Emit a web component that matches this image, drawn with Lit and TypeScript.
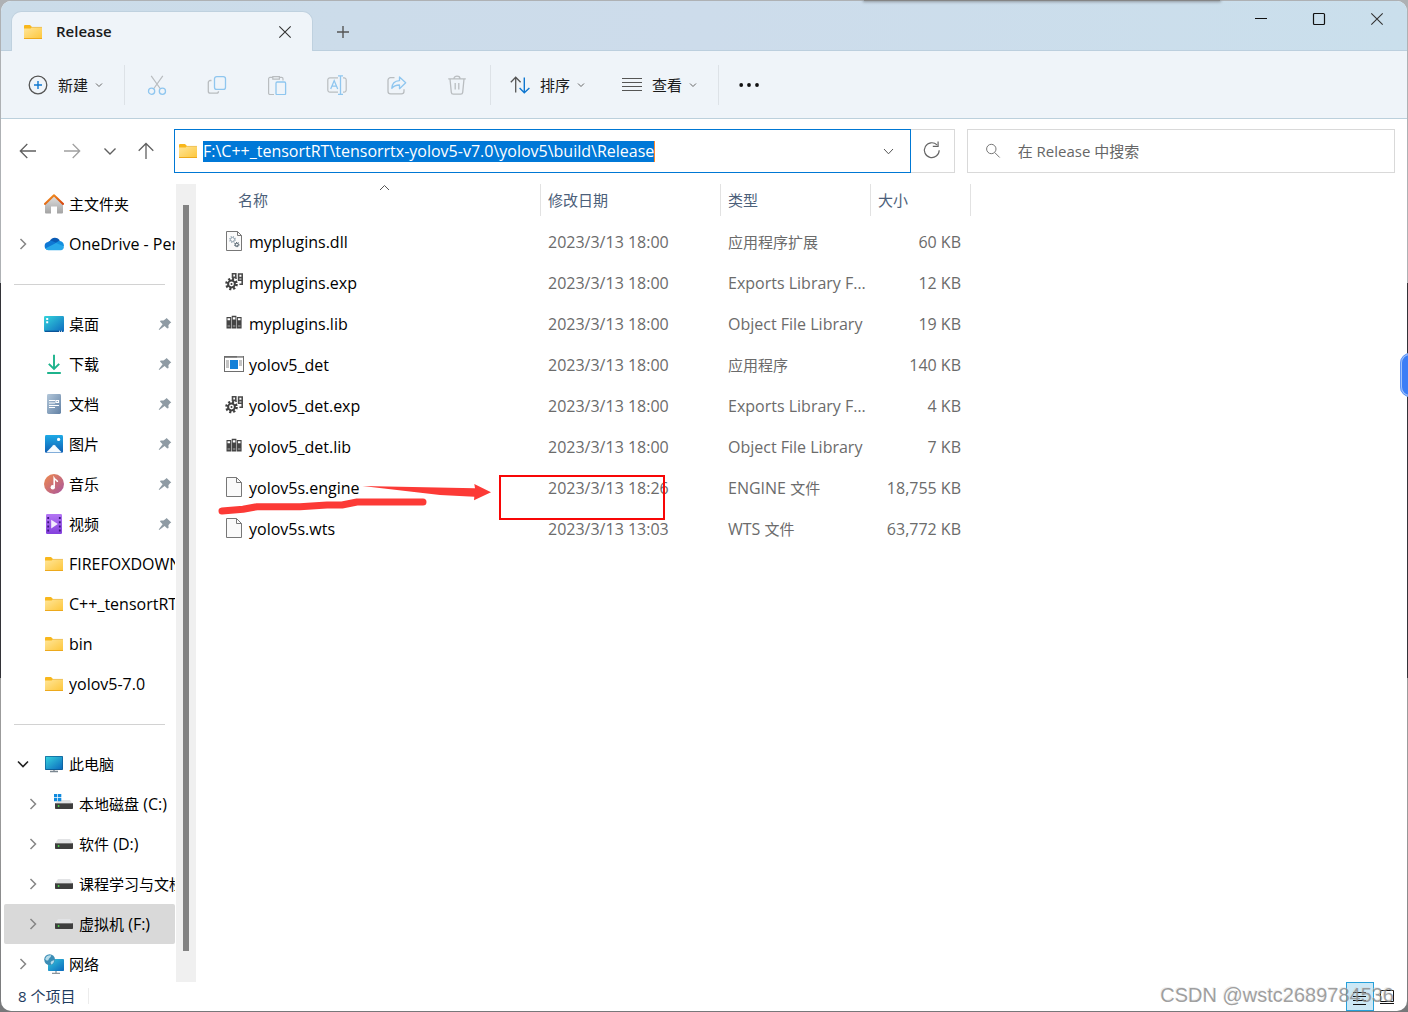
import { LitElement, html, css, svg, nothing, TemplateResult } from "lit";
import { customElement } from "lit/decorators.js";
import { classMap } from "lit/directives/class-map.js";

/* Splits a label into Han and Latin runs so that each run gets its own face and size. */
const runs = (text: string) =>
  (text.match(/[\u4e00-\u9fff]+|[^\u4e00-\u9fff]+/g) ?? []).map((part) =>
    /[\u4e00-\u9fff]/.test(part) ? html`<span class="han">${part}</span>` : part
  );

const icon = (body: unknown, size = 20) =>
  html`<svg class="icon" width=${size} height=${size} viewBox="0 0 ${size} ${size}" fill="none" aria-hidden="true">${body}</svg>`;

/* A ring of eight short teeth. */
const gearTeeth = (cx: number, cy: number, r: number, color: string, w: number) =>
  svg`<circle cx=${cx} cy=${cy} r=${r} stroke=${color} stroke-width=${w} stroke-dasharray="${r * 0.4} ${r * 0.3854}"/>`;

const art: Record<string, () => TemplateResult> = {
  folder: () =>
    icon(svg`
      <defs><linearGradient id="f" x1="0" y1="0" x2="1" y2="1"><stop offset="0" stop-color="#ffe69a"/><stop offset="1" stop-color="#fdc63a"/></linearGradient></defs>
      <path d="M1 4a1 1 0 0 1 1-1h5l2 2v3H1z" fill="#f8b71c"/>
      <path d="M1 6.6h6.6L9 5.2h9.4a.6.6 0 0 1 .6.6V16a1 1 0 0 1-1 1H2a1 1 0 0 1-1-1z" fill="url(#f)"/>
      <path d="M1 16.5h18" stroke="#eda91c"/><path d="M9 5.4h10" stroke="#e9b43c" stroke-width=".7"/>`),
  home: () =>
    icon(svg`
      <defs><linearGradient id="h" x1="0" y1="0" x2="0" y2="1"><stop offset="0" stop-color="#e2e2e2"/><stop offset="1" stop-color="#a3a3a3"/></linearGradient>
      <linearGradient id="r" x1="0" y1="0" x2="1" y2="1"><stop offset="0" stop-color="#f59a23"/><stop offset="1" stop-color="#d8430c"/></linearGradient></defs>
      <path d="M1 9.5 10 1.6l9 7.9v9a1 1 0 0 1-1 1h-5v-7.1H7v7.1H2a1 1 0 0 1-1-1z" fill="url(#h)"/>
      <path d="M.9 9.9 10 1.300l9.100 8.600" stroke="url(#r)" stroke-width="2.100" stroke-linecap="round" stroke-linejoin="round"/>`),
  cloud: () =>
    icon(svg`
      <path d="M5.800 7.200A5.400 5.400 0 0 1 15.800 7L13 12z" fill="#0a5bb5"/>
      <path d="M4 8a4.300 4.300 0 0 1 4.600-.8L17 11l-13 4.900A4 4 0 0 1 4 8z" fill="#0f78d4"/>
      <path d="M11 9.300 14.800 7a4.600 4.600 0 0 1 5.100 5l-3 1z" fill="#1490df"/>
      <path d="M1.300 14.500 12 9.100l7.800 3.100a3.300 3.300 0 0 1-3.100 4H4.300a4.100 4.100 0 0 1-3-1.700z" fill="#28a8ea"/>`),
  desktop: () =>
    icon(svg`
      <defs><linearGradient id="d" x1="0" y1="0" x2="1" y2="1"><stop offset="0" stop-color="#35d5dc"/><stop offset="1" stop-color="#0d69bf"/></linearGradient></defs>
      <rect y="2" width="20" height="16" rx="1.200" fill="url(#d)"/>
      <path d="M1 17.300h18" stroke="#0a4f93" stroke-width="1.200"/>
      <path d="M2.200 4h2v2h-2zM2.200 7.200h2v2h-2zM15 16.800h1v1h-1zM17 16.800h1v1h-1z" fill="#fff"/>`),
  download: () =>
    icon(svg`<path d="M10 .8v14M4.800 9.800 10 15l5.200-5.200M3.200 19h13.600" stroke="#1db38c" stroke-width="1.900"/>`),
  document: () =>
    icon(svg`
      <defs><linearGradient id="o" x1="0" y1="0" x2="1" y2="1"><stop offset="0" stop-color="#b3c7da"/><stop offset="1" stop-color="#6281a4"/></linearGradient></defs>
      <rect x="3" y="0" width="14" height="20" rx="1.400" fill="url(#o)"/>
      <path d="M5 6.500h6M5 9h6M5 11.500h10M5 13.500h6M12 6.500h2.500v2H12z" stroke="#fff" stroke-width="1.200"/>`),
  picture: () =>
    icon(svg`
      <defs><linearGradient id="p" x1="0" y1="0" x2="0" y2="1"><stop offset="0" stop-color="#1eaae6"/><stop offset="1" stop-color="#0e5db2"/></linearGradient></defs>
      <rect x="1" y="1" width="18" height="18" rx="1.400" fill="url(#p)"/>
      <path d="m2.200 18.400 7-7.200a1.200 1.200 0 0 1 1.600 0l7 7.200z" fill="#f5fbff"/><circle cx="14.600" cy="5.400" r="1.600" fill="#fff"/>`),
  music: () =>
    icon(svg`
      <defs><linearGradient id="m" x1="0" y1="0" x2="1" y2="1"><stop offset="0" stop-color="#f08a4b"/><stop offset="1" stop-color="#a8559f"/></linearGradient></defs>
      <circle cx="10" cy="10" r="10" fill="url(#m)"/>
      <path d="M10.200 12.500V4.400c.8 1.400 3 1.300 3.300 3.600" stroke="#fff" stroke-width="1.600"/><circle cx="8.800" cy="13.200" r="2.200" fill="#fff"/>`),
  video: () =>
    icon(svg`
      <defs><linearGradient id="v" x1="0" y1="0" x2="0" y2="1"><stop offset="0" stop-color="#b476f4"/><stop offset="1" stop-color="#8440dd"/></linearGradient></defs>
      <rect x="2" y="0" width="16" height="20" rx="1.200" fill="url(#v)"/>
      <path d="M4.200 3v15M15.800 3v15" stroke="#3d1580" stroke-width="1.800" stroke-dasharray="2 2.200"/>
      <path d="M7.200 5.800v8.600l6.600-4.300z" fill="#f3ecfd"/>`),
  pc: () =>
    icon(svg`
      <defs><linearGradient id="c" x1="0" y1="0" x2="1" y2="1"><stop offset="0" stop-color="#37d3de"/><stop offset="1" stop-color="#0b69bd"/></linearGradient></defs>
      <rect x="1" y="2" width="18" height="14" rx=".8" fill="#0b5a94"/><rect x="1.700" y="2.700" width="16.600" height="12.400" fill="url(#c)"/>
      <path d="M10 16v1.500M6 17.500h8" stroke="#7b8791" stroke-width="1.300"/>`),
  network: () =>
    icon(svg`
      <defs><linearGradient id="n" x1="0" y1="0" x2="1" y2="1"><stop offset="0" stop-color="#37c8dc"/><stop offset="1" stop-color="#0b69bd"/></linearGradient></defs>
      <rect x="4" y="5" width="16" height="12" rx=".8" fill="url(#n)"/>
      <path d="M12 17v2M8 19.300h8" stroke="#8b959d" stroke-width="1.300"/>
      <circle cx="5.600" cy="5.600" r="5.400" fill="#3c8db5"/>
      <path d="M1.200 5C2 2 5 1 7.200 1.400 6.500 4 5 3.600 4.600 5.400 4 7.400 2 6.600 1.200 5zM6.600 8.400c1-2 2.800-1.200 3.600-2.600.2 2.600-1.600 4.300-3 4.700z" fill="#b6dcea"/>`),
  drive: () =>
    icon(svg`
      <path d="M4 5h12l3 4.500H1z" fill="#e2e3e5"/>
      <rect x="1" y="9" width="18" height="6" rx=".8" fill="#3e3e3e"/><path d="M1.500 9.500h17" stroke="#777"/>
      <circle cx="4.600" cy="12" r=".9" fill="#4be04b"/>`),
  system: () =>
    icon(svg`
      <path d="M4 6h12l3 4.500H1z" fill="#e2e3e5"/>
      <rect x="1" y="9" width="18" height="6" rx=".8" fill="#3e3e3e"/><path d="M1.500 9.500h17" stroke="#777"/>
      <circle cx="4.600" cy="12" r=".9" fill="#4be04b"/>
      <path d="M0 0h3.300v3.300H0zM4 0h3.300v3.300H4zM0 4h3.300v3.300H0zM4 4h3.300v3.300H4z" fill="#108ade"/>`),
  dll: () =>
    icon(svg`
      <path d="M2.500.5h11l4 4v15h-15z" fill="#fafafa" stroke="#777"/><path d="M13.500.5v4h4" stroke="#777"/>
      ${gearTeeth(8.500, 8.500, 2.600, "#9aa9b5", 1.800)}<circle cx="8.500" cy="8.500" r="2" stroke="#9aa9b5"/>
      ${gearTeeth(12.800, 13.600, 2, "#566571", 1.400)}<circle cx="12.800" cy="13.600" r="1.500" stroke="#566571"/>`),
  exp: () =>
    icon(svg`
      ${gearTeeth(7.500, 12, 5, "#3f3f3f", 2.600)}<circle cx="7.500" cy="12" r="3.400" stroke="#3f3f3f" stroke-width="2"/><circle cx="7.500" cy="12" r="1" fill="#3f3f3f"/>
      <path d="M8.500 1.800h3.300v3.400H8.500zM14.600 2h3.600v3.600h-3.600zM18.200 5v7.200h-2.800M14.600 5.500v2.800h3.600M11.200 6.300h1.600" stroke="#4a4a4a" stroke-width="1.600"/>`),
  lib: () =>
    icon(svg`
      <path d="M2.500 4h4.700v11.500H2.500zM7.700 2.700h4.700v12.800H7.700zM12.900 4h4.700v11.500h-4.700z" fill="#454545"/>
      <path d="M3.500 5.200h2.600v2H3.500zM8.800 4.200h2.600v2.200H8.800zM13.900 5.200h2.600v2h-2.600z" fill="#fff"/>
      <path d="M3.500 13h2.600M8.800 13h2.600M13.900 13h2.600" stroke="#aaa"/>`),
  exe: () =>
    icon(svg`
      <rect x=".5" y="2.500" width="19" height="15" fill="#fff" stroke="#6e6e6e"/><path d="M0 3h20" stroke="#6e6e6e" stroke-width="1.600"/>
      <path d="M13.500 3h5" stroke="#fff" stroke-dasharray="1 1"/>
      <rect x="6" y="6" width="8" height="9" fill="#1380d8"/>
      <path d="M2 7h3M2 9h3M2 11h3M2 13h3M15 7h3M15 9h3M15 11h3" stroke="#8a8a8a"/>`),
  blank: () =>
    icon(svg`<path d="M2.500.5h10l5 5v14h-15z" fill="#fafafa" stroke="#777"/><path d="M12.500.5v5h5" stroke="#777"/>`),
  pin: () =>
    icon(svg`<path d="m8.600.9 4.700 4.500-1.300.8-1.600 2 .2 2.900-1.300.5L6.600 9 1.200 13l-.5-.5 3.900-5.300L2 4.600l.6-1.200 2.900.2L7.600 2z" fill="#8f9ba4"/>`, 14),
  plus: () =>
    icon(svg`<circle cx="10" cy="10" r="8.800" stroke="#555" stroke-width="1.300"/><path d="M10 6v8M6 10h8" stroke="#0f77d0" stroke-width="1.400"/>`),
  cut: () =>
    icon(svg`<path d="M4.200.8 13.500 14M15.800.8 6.500 14" stroke="#b9bdc0" stroke-width="1.200"/><circle cx="4.600" cy="16.200" r="3.100" stroke="#8fc6ef" stroke-width="1.300"/><circle cx="15.400" cy="16.200" r="3.100" stroke="#8fc6ef" stroke-width="1.300"/>`),
  copy: () =>
    icon(svg`<path d="M4.500 5.500H3.300a2 2 0 0 0-2 2v8.700a2 2 0 0 0 2 2h6.200a2 2 0 0 0 2-2" stroke="#b9bdc0" stroke-width="1.300"/><rect x="7.500" y="1.600" width="11" height="12.800" rx="2.200" stroke="#8fc6ef" stroke-width="1.300"/>`),
  paste: () =>
    icon(svg`<path d="M6 2.400H3a1.400 1.400 0 0 0-1.400 1.400v14.400A1.400 1.400 0 0 0 3 19.600h4M12 2.400h2.600a1.400 1.400 0 0 1 1.400 1.400v1.600M5.800 1.600h6.600v2.600H5.800z" stroke="#b9bdc0" stroke-width="1.200"/><rect x="9" y="7" width="9.600" height="12.600" rx="1.200" stroke="#8fc6ef" stroke-width="1.300"/>`),
  rename: () =>
    icon(svg`<path d="M11 2.800H3a2.200 2.200 0 0 0-2.200 2.200v10A2.200 2.200 0 0 0 3 17.200h8M16 2.800h1a2.200 2.200 0 0 1 2.200 2.200v10a2.200 2.200 0 0 1-2.200 2.200h-1" stroke="#b9bdc0" stroke-width="1.200"/><path d="M3.700 14 7.200 5.600l3.500 8.400M4.800 11.200h4.800M13.500 1v18.200M11 .8h5M11 19.400h5" stroke="#8fc6ef" stroke-width="1.300"/>`),
  share: () =>
    icon(svg`<path d="M7.500 2.600H3.600A2.600 2.600 0 0 0 1 5.200v11a2.600 2.600 0 0 0 2.600 2.600h10.800a2.600 2.600 0 0 0 2.600-2.600v-2" stroke="#b9bdc0" stroke-width="1.300"/><path d="M12.500 2v3.600C8 5.800 5 8.500 4.800 13.400c2-2.600 4.200-3.400 7.700-3.400v3.700l6.200-5.900z" stroke="#8fc6ef" stroke-width="1.300" stroke-linejoin="round"/>`),
  trash: () =>
    icon(svg`<path d="M1.200 3.800h17.600M7 3.600c0-3.400 6-3.400 6 0M3 4l1.300 13.400a2 2 0 0 0 2 1.800h7.400a2 2 0 0 0 2-1.800L17 4M8.200 8v6.400M11.800 8v6.400" stroke="#b9bdc0" stroke-width="1.300"/>`),
  sort: () =>
    icon(svg`<path d="M5.700 17.500V2.200M.8 7.200l4.900-5 4.900 5" stroke="#555" stroke-width="1.300"/><path d="M14.300 2.500v15.300M9.600 13l4.700 4.800L19.400 13" stroke="#0f77d0" stroke-width="1.400"/>`),
  view: () =>
    icon(svg`<path d="M0 3.500h20M0 7.500h20M0 11.500h20M0 15.500h20" stroke="#555"/>`),
  more: () =>
    icon(svg`<circle cx="2.200" cy="10" r="1.900" fill="#111"/><circle cx="10" cy="10" r="1.900" fill="#111"/><circle cx="18" cy="10" r="1.900" fill="#111"/>`),
  back: () => icon(svg`<path d="M18 10H2.500M9.300 3 2.300 10l7 7" stroke="#606060" stroke-width="1.300"/>`),
  forward: () => icon(svg`<path d="M2 10h15.500M10.700 3l7 7-7 7" stroke="#a0a0a0" stroke-width="1.300"/>`),
  recent: () => icon(svg`<path d="m1.500 4.500 5.500 5.500 5.500-5.500" stroke="#606060" stroke-width="1.400"/>`, 14),
  up: () => icon(svg`<path d="M10 18V2.600M2.700 9.800 10 2.500l7.300 7.300" stroke="#606060" stroke-width="1.300"/>`),
  chevron: () => icon(svg`<path d="m1 2.500 3 3 3-3" stroke="#666"/>`, 8),
  drop: () => icon(svg`<path d="m1 3 4.500 4.800L10 3" stroke="#555"/>`, 11),
  right: () => icon(svg`<path d="m5.500 3 5 5-5 5" stroke="#868686" stroke-width="1.500"/>`, 16),
  down: () => icon(svg`<path d="m3 5.500 5 5 5-5" stroke="#222" stroke-width="1.600"/>`, 16),
  refresh: () => icon(svg`<path d="M17.200 9.200A7.400 7.400 0 1 1 15 3.900M16.100.6v4.700h-5.300" stroke="#666" stroke-width="1.200"/>`),
  search: () => icon(svg`<circle cx="6.300" cy="6" r="4.700" stroke="#777"/><path d="m9.700 9.500 5 5" stroke="#777"/>`, 16),
  close: () => icon(svg`<path d="m1.300 1.300 11.400 11.400M12.700 1.300 1.300 12.700" stroke="#333" stroke-width="1.100"/>`, 14),
  add: () => icon(svg`<path d="M7 1v12M1 7h12" stroke="#555" stroke-width="1.400"/>`, 14),
  minimise: () => icon(svg`<path d="M1 6.500h12" stroke="#111"/>`, 14),
  maximise: () => icon(svg`<rect x="1.500" y="1.500" width="11" height="11" rx="1" stroke="#111" stroke-width="1.200"/>`, 14),
  caret: () => icon(svg`<path d="m1 7 4.500-4.500L10 7" stroke="#555"/>`, 11),
  details: () => icon(svg`<path d="M1 3.500h13M1 7.500h13M1 11.500h13M1 15.500h13" stroke="#111"/>`, 16),
  large: () => icon(svg`<path d="M1.500 1.500h13v11h-13zM1 14.500h14" stroke="#111"/>`, 16),
};

interface Place {
  label: string;
  art: string;
  arrow?: "right" | "down";
  nested?: boolean;
  pinned?: boolean;
  selected?: boolean;
}

const places: Place[][] = [
  [
    { label: "主文件夹", art: "home" },
    { label: "OneDrive - Personal", art: "cloud", arrow: "right" },
  ],
  [
    { label: "桌面", art: "desktop", pinned: true },
    { label: "下载", art: "download", pinned: true },
    { label: "文档", art: "document", pinned: true },
    { label: "图片", art: "picture", pinned: true },
    { label: "音乐", art: "music", pinned: true },
    { label: "视频", art: "video", pinned: true },
    { label: "FIREFOXDOWN", art: "folder" },
    { label: "C++_tensortRT", art: "folder" },
    { label: "bin", art: "folder" },
    { label: "yolov5-7.0", art: "folder" },
  ],
  [
    { label: "此电脑", art: "pc", arrow: "down" },
    { label: "本地磁盘 (C:)", art: "system", arrow: "right", nested: true },
    { label: "软件 (D:)", art: "drive", arrow: "right", nested: true },
    { label: "课程学习与文档", art: "drive", arrow: "right", nested: true },
    { label: "虚拟机 (F:)", art: "drive", arrow: "right", nested: true, selected: true },
    { label: "网络", art: "network", arrow: "right" },
  ],
];

const files = [
  ["dll", "myplugins.dll", "2023/3/13 18:00", "应用程序扩展", "60 KB"],
  ["exp", "myplugins.exp", "2023/3/13 18:00", "Exports Library File", "12 KB"],
  ["lib", "myplugins.lib", "2023/3/13 18:00", "Object File Library", "19 KB"],
  ["exe", "yolov5_det", "2023/3/13 18:00", "应用程序", "140 KB"],
  ["exp", "yolov5_det.exp", "2023/3/13 18:00", "Exports Library File", "4 KB"],
  ["lib", "yolov5_det.lib", "2023/3/13 18:00", "Object File Library", "7 KB"],
  ["blank", "yolov5s.engine", "2023/3/13 18:26", "ENGINE 文件", "18,755 KB"],
  ["blank", "yolov5s.wts", "2023/3/13 13:03", "WTS 文件", "63,772 KB"],
];

const base = css`
  :host, * { box-sizing: border-box; }
  button, input { font: inherit; color: inherit; border: 0; padding: 0; margin: 0; background: none; outline: 0; }
  button { display: flex; align-items: center; justify-content: center; }
  .icon { display: block; flex: none; }
  .han { font-family: "Noto Sans CJK SC", sans-serif; font-size: 15px; }
`;

@customElement("title-bar")
class TitleBar extends LitElement {
  static styles = [base, css`
    :host { display: flex; align-items: flex-end; height: 50px; padding-left: 10px; background: linear-gradient(90deg, #cbdce9, #cddceb 50%, #cadfec); border-bottom: 1px solid #bccfde; }
    .tab { position: relative; display: flex; align-items: center; gap: 13px; width: 302px; height: 40px; margin-bottom: -1px; padding: 0 20px 0 11px; background: #eff4f9; border: 1px solid #bfd1df; border-bottom: 0; border-radius: 10px 10px 0 0; }
    .name { flex: 1; font-size: 15px; font-weight: 600; line-height: 22px; margin-bottom: 2px; color: #1b1b1b; }
    .new { width: 60px; height: 36px; }
    .controls { display: flex; align-self: flex-start; margin: 0 1px 0 auto; }
    .controls button { width: 58px; height: 36px; }
  `];
  render() {
    return html`
      <div class="tab">${art.folder()}<span class="name">Release</span><button aria-label="关闭标签页">${art.close()}</button></div>
      <button class="new" aria-label="新标签页">${art.add()}</button>
      <div class="controls">
        <button aria-label="最小化">${art.minimise()}</button>
        <button aria-label="最大化">${art.maximise()}</button>
        <button aria-label="关闭">${art.close()}</button>
      </div>`;
  }
}

@customElement("command-bar")
class CommandBar extends LitElement {
  static styles = [base, css`
    :host { display: flex; align-items: center; height: 68px; padding-left: 8px; background: #eff4f9; border-bottom: 1px solid #bcd0dc; color: #1b1b1b; }
    .menu { height: 40px; padding: 0 18px 0 19px; }
    .label { margin: 0 7px 0 10px; }
    .tools { display: flex; margin-left: 2px; }
    .tool { width: 60px; height: 40px; }
    .rule { width: 1px; height: 40px; margin-left: 3px; background: #dde2e7; }
  `];
  private menu(name: string, label: string) {
    return html`<button class="menu">${art[name]()}<span class="label">${runs(label)}</span>${art.chevron()}</button>`;
  }
  render() {
    const tools = [["cut", "剪切"], ["copy", "复制"], ["paste", "粘贴"], ["rename", "重命名"], ["share", "共享"], ["trash", "删除"]];
    return html`
      ${this.menu("plus", "新建")}
      <div class="rule"></div>
      <div class="tools">${tools.map(([name, label]) => html`<button class="tool" aria-label=${label}>${art[name]()}</button>`)}</div>
      <div class="rule"></div>
      ${this.menu("sort", "排序")}${this.menu("view", "查看")}
      <div class="rule"></div>
      <button class="tool" aria-label="更多">${art.more()}</button>`;
  }
}

@customElement("address-bar")
class AddressBar extends LitElement {
  static styles = [base, css`
    :host { display: flex; align-items: flex-start; height: 65px; padding: 10px 12px 0 5px; }
    .history { display: flex; margin-right: 8px; }
    .history button { height: 44px; }
    .wide { width: 44px; }
    .slim { width: 32px; }
    .mid { width: 40px; }
    .address { display: flex; align-items: center; flex: 715 1 0; min-width: 0; height: 44px; padding: 0 16px 0 3px; border: 1px solid #0078d4; }
    .path { field-sizing: content; min-width: 0; height: 21px; margin: 0 auto 0 5px; color: #fff; background: #0078d7; border-right: 1px solid #ff8728; line-height: 20px; }
    .refresh { width: 44px; height: 44px; border: 1px solid #d9d9d9; border-left: 0; }
    .search { display: flex; align-items: center; gap: 17px; flex: 392 1 0; min-width: 0; height: 44px; margin-left: 12px; padding: 0 17px; border: 1px solid #d9d9d9; }
    .query { flex: 1; min-width: 0; font-size: 15px; line-height: 24px; color: #666; }
    .query::placeholder { color: #666; opacity: 1; }
  `];
  render() {
    return html`
      <div class="history">
        <button class="wide" aria-label="后退">${art.back()}</button>
        <button class="wide" aria-label="前进">${art.forward()}</button>
        <button class="slim" aria-label="最近的位置">${art.recent()}</button>
        <button class="mid" aria-label="向上">${art.up()}</button>
      </div>
      <div class="address">
        ${art.folder()}
        <input class="path" aria-label="地址" spellcheck="false" value="F:\\C++_tensortRT\\tensorrtx-yolov5-v7.0\\yolov5\\build\\Release" />
        <button aria-label="以前的位置">${art.drop()}</button>
      </div>
      <button class="refresh" aria-label="刷新">${art.refresh()}</button>
      <label class="search">${art.search()}<input class="query" type="text" aria-label="搜索" placeholder="在 Release 中搜索" /></label>`;
  }
}

@customElement("place-list")
class PlaceList extends LitElement {
  static styles = [base, css`
    :host { display: flex; width: 195px; flex: none; overflow: hidden; }
    .places { flex: 1; min-width: 0; padding-left: 3px; }
    .item { display: flex; align-items: center; height: 40px; margin-right: 1px; padding-left: 11px; color: #000; text-decoration: none; border-radius: 2px; }
    .nested { padding-left: 21px; }
    .selected { background: #d9d9d9; }
    .arrow { width: 16px; margin-right: 13px; }
    .label { flex: 1; min-width: 0; margin-left: 5px; overflow: hidden; white-space: nowrap; line-height: 24px; }
    .pin { margin-right: 3px; }
    .rule { height: 1px; margin: 20px 11px 19px 10px; border: 0; background: #d2d2d2; }
    .track { width: 20px; padding: 21px 7px 31px; background: #f0f0f0; }
    .thumb { width: 6px; height: 100%; background: #838383; }
  `];
  private item(p: Place) {
    return html`<a href="#" class=${classMap({ item: true, nested: !!p.nested, selected: !!p.selected })}>
      <span class="arrow">${p.arrow ? art[p.arrow]() : nothing}</span>${art[p.art]()}
      <span class="label">${runs(p.label)}</span>${p.pinned ? html`<span class="pin">${art.pin()}</span>` : nothing}</a>`;
  }
  render() {
    return html`
      <nav class="places">
        ${places.map((group, i) => html`${i ? html`<hr class="rule" />` : nothing}${group.map((p) => this.item(p))}`)}
      </nav>
      <div class="track"><div class="thumb"></div></div>`;
  }
}

@customElement("file-table")
class FileTable extends LitElement {
  static styles = [base, css`
    :host { display: block; position: relative; flex: 1; min-width: 0; overflow: hidden; padding-left: 21px; }
    table { width: 754px; table-layout: fixed; border-collapse: collapse; white-space: nowrap; color: #6b6b6b; line-height: 24px; }
    .c-name { width: 324px; }
    .c-date { width: 180px; }
    .c-type { width: 150px; }
    .c-size { width: 100px; }
    th { height: 37px; padding: 0; vertical-align: top; font-weight: 400; color: #4c607a; }
    th button { position: relative; justify-content: flex-start; width: 100%; height: 32px; padding-left: 7px; border-right: 1px solid #e2e2e2; }
    th:first-child button { padding-left: 21px; }
    .caret { position: absolute; top: -1px; left: 50%; }
    td { height: 41px; padding: 0 3px 0 7px; overflow: hidden; text-overflow: ellipsis; }
    td:first-child { color: #000; }
    td:last-child { padding-right: 10px; text-align: right; }
    .file { display: flex; align-items: center; gap: 5px; }
    .file .icon { margin-bottom: 2px; }
    .marks { position: absolute; top: 284px; left: 20px; }
  `];
  render() {
    return html`
      <table>
        <colgroup><col class="c-name" /><col class="c-date" /><col class="c-type" /><col class="c-size" /></colgroup>
        <thead><tr>
          <th><button>${runs("名称")}<span class="caret">${art.caret()}</span></button></th>
          <th><button>${runs("修改日期")}</button></th>
          <th><button>${runs("类型")}</button></th>
          <th><button>${runs("大小")}</button></th>
        </tr></thead>
        <tbody>
          ${files.map(([kind, name, date, type, size]) => html`<tr>
            <td><span class="file">${art[kind]()}<span>${name}</span></span></td>
            <td>${date}</td><td>${runs(type)}</td><td>${size}</td>
          </tr>`)}
        </tbody>
      </table>
      <svg class="marks" width="460" height="60" viewBox="216 468 460 60" fill="none" aria-hidden="true">
        <path d="M222 511 243 509.300 257 506.700H300L327 505H342L357 502H423" stroke="#fc3a36" stroke-width="7" stroke-linecap="round" stroke-linejoin="round"/>
        <path d="M362.500 486 475 488.300 474.300 484 491 492.300 474 500.300 474.300 496.700 440 495z" fill="#fc3a36"/>
        <rect x="500" y="476" width="164" height="43" stroke="#f80606" stroke-width="2"/>
      </svg>`;
  }
}

@customElement("status-bar")
class StatusBar extends LitElement {
  static styles = [base, css`
    :host { display: flex; align-items: center; height: 29px; padding: 0 7px 0 17px; color: #1e3c5f; }
    .count { font-size: 15px; padding-right: 12px; border-right: 1px solid #ececec; line-height: 16px; margin-bottom: 2px; }
    .views { display: flex; margin-left: auto; }
    .views button { width: 26px; height: 29px; }
    .views .on { width: 28px; background: #cce8f6; border: 1px solid #26a0da; }
  `];
  render() {
    return html`
      <span class="count">${runs("8 个项目")}</span>
      <div class="views">
        <button class="on" aria-label="详细信息" aria-pressed="true">${art.details()}</button>
        <button aria-label="大图标" aria-pressed="false">${art.large()}</button>
      </div>`;
  }
}

@customElement("app-root")
class AppRoot extends LitElement {
  static styles = css`
    :host {
      display: block; position: relative; height: 100vh; overflow: hidden; box-sizing: border-box; padding: 1px;
      font-family: "Open Sans", "Noto Sans CJK SC", sans-serif; font-size: 16px; line-height: 24px;
      background: linear-gradient(#aeb1b4 0 28%, #333338 28% 67%, #9b9b9b 67% 80%, #77787a);
    }
    .window { display: flex; flex-direction: column; height: 100%; overflow: hidden; background: #fff; border-radius: 10px; }
    .main { display: flex; flex: 1; min-height: 0; }
    .shade { position: absolute; top: 0; right: 188px; width: 356px; height: 1px; background: #858585; box-shadow: 0 0 3px 1px #8d959c; }
    .handle { position: absolute; top: 353px; right: -30px; width: 38px; height: 44px; background: #3c7ef6; border: 2px solid #a3c4fb; outline: 1px solid #5b93f7; outline-offset: -1px; border-radius: 10px; box-sizing: border-box; }
    .watermark { position: absolute; right: 14px; bottom: 5px; font-family: "Liberation Sans", sans-serif; font-size: 20px; color: rgba(130, 130, 130, 0.75); text-shadow: -1px -1px 0 rgba(210, 210, 210, 0.4); pointer-events: none; }
  `;
  render() {
    return html`
      <div class="window">
        <title-bar></title-bar>
        <command-bar></command-bar>
        <address-bar></address-bar>
        <div class="main"><place-list></place-list><file-table></file-table></div>
        <status-bar></status-bar>
      </div>
      <div class="shade"></div>
      <div class="handle"></div>
      <div class="watermark">CSDN @wstc2689784536</div>`;
  }
}
